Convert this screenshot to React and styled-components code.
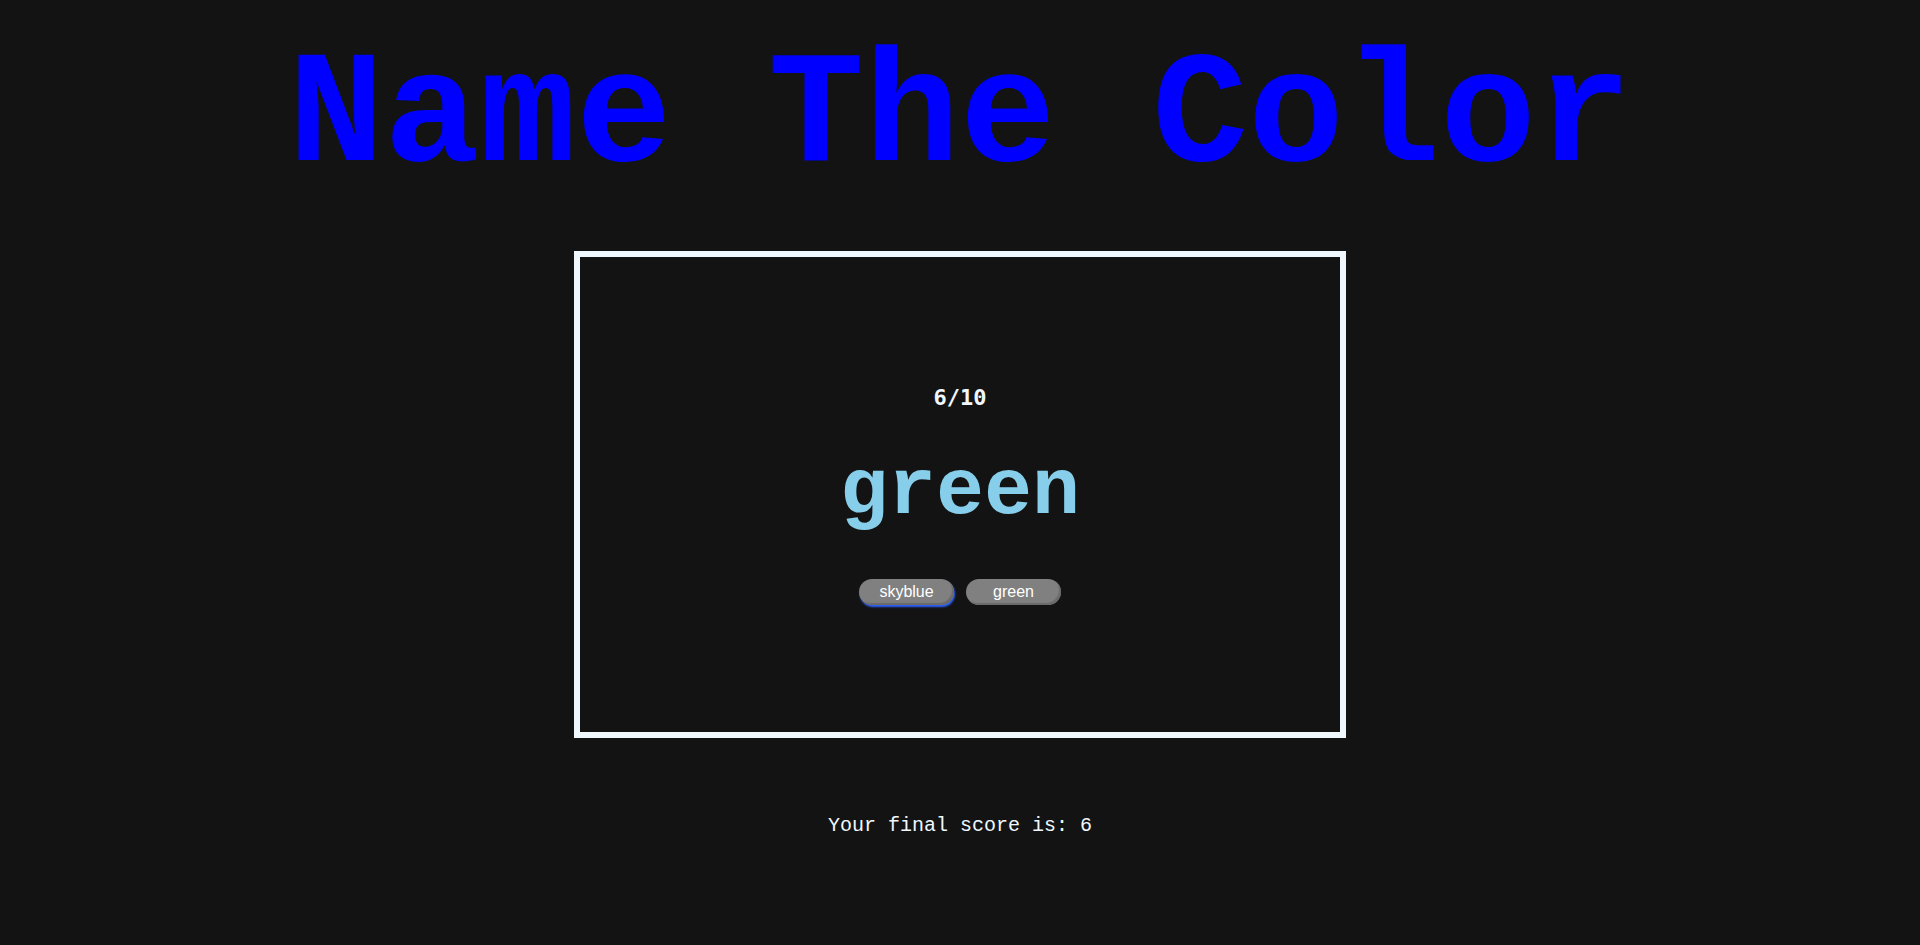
import React from "react";
import styled, { createGlobalStyle } from "styled-components";

const MONO = `"Courier New", "Nimbus Mono PS", "Nimbus Mono L", FreeMono, Courier, "Liberation Mono", monospace`;

const Global = createGlobalStyle`
  html, body { margin: 0; padding: 0; background: #131313; }
  body { min-height: 945px; font-family: ${MONO}; }
`;

const Page = styled.main`
  display: flex;
  flex-direction: column;
  align-items: center;
  background: #131313;
  min-height: 945px;
`;

const Title = styled.h1`
  margin: 27px 0 43px;
  font-family: ${MONO};
  font-weight: 700;
  font-size: 160px;
  line-height: normal;
  color: #0000ff;
  white-space: pre;
`;

const Board = styled.section`
  box-sizing: border-box;
  width: 772px;
  height: 487px;
  border: 6px solid aliceblue;
  display: flex;
  flex-direction: column;
  align-items: center;
  justify-content: center;
`;

const Counter = styled.div`
  font-family: "DejaVu Sans Mono", monospace;
  font-weight: 700;
  font-size: 22px;
  color: aliceblue;
`;

const Word = styled.div`
  margin-top: 36px;
  font-family: ${MONO};
  font-weight: 700;
  font-size: 80px;
  line-height: normal;
  color: ${(p) => p.$color};
`;

const Choices = styled.div`
  margin-top: 42px;
  display: flex;
  gap: 12px;
`;

const Choice = styled.button`
  box-sizing: border-box;
  width: 95px;
  height: 26px;
  padding: 0;
  border: none;
  border-radius: 13px;
  background: #808080;
  color: #ffffff;
  font-family: "Liberation Sans", Arial, sans-serif;
  font-size: 16px;
  box-shadow: ${(p) =>
    p.$focused
      ? "inset -2px -2px 1px #6a6a6a, 1px 2px 2px #2f62ff"
      : "inset -2px -2px 1px #6a6a6a"};
  cursor: pointer;
`;

const Score = styled.p`
  margin: 76px 0 0;
  font-family: ${MONO};
  font-size: 20px;
  color: aliceblue;
`;

export default function App() {
  return (
    <>
      <Global />
      <Page>
        <Title>Name The Color</Title>
        <Board>
          <Counter>6/10</Counter>
          <Word $color="skyblue">green</Word>
          <Choices>
            <Choice $focused>skyblue</Choice>
            <Choice>green</Choice>
          </Choices>
        </Board>
        <Score>Your final score is: 6</Score>
      </Page>
    </>
  );
}
